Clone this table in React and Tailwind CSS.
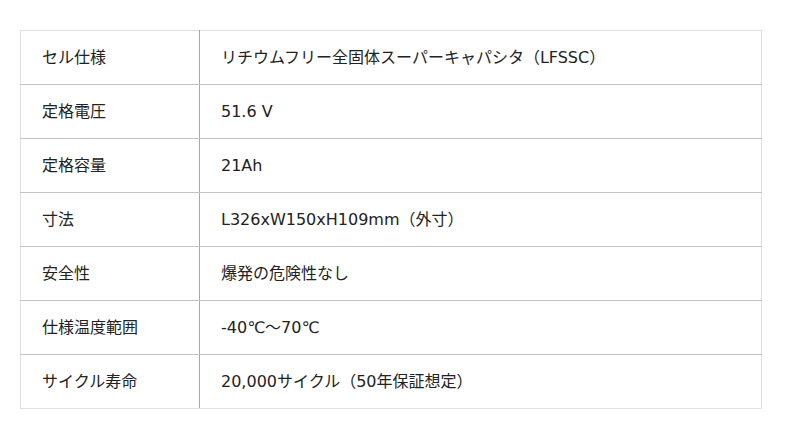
import React from 'react';

const specs = [
  ['セル仕様', 'リチウムフリー全固体スーパーキャパシタ（LFSSC）'],
  ['定格電圧', '51.6 V'],
  ['定格容量', '21Ah'],
  ['寸法', 'L326xW150xH109mm（外寸）'],
  ['安全性', '爆発の危険性なし'],
  ['仕様温度範囲', '-40℃〜70℃'],
  ['サイクル寿命', '20,000サイクル（50年保証想定）'],
];

export default function App() {
  return (
    <div
      className="w-[800px] h-[439px] bg-white pt-[30px] pl-[20px]"
      style={{ fontFamily: '"DejaVu Sans", "Noto Sans CJK JP", sans-serif' }}
    >
      <table className="w-[742px] border-collapse text-[16px] text-[#222]">
        <tbody>
          {specs.map(([label, value], i) => (
            <tr key={label} className="h-[54px]">
              <td
                className={
                  'w-[179px] pl-[21px] border-l border-l-[#e0e0e0] border-r border-r-[#a8a8a8] ' +
                  (i === 0 ? 'border-t border-t-[#e0e0e0] ' : '') +
                  (i === specs.length - 1 ? 'border-b border-b-[#e0e0e0]' : 'border-b border-b-[#c4c4c4]')
                }
              >
                {label}
              </td>
              <td
                className={
                  'pl-[21px] border-r border-r-[#e0e0e0] ' +
                  (i === 0 ? 'border-t border-t-[#e0e0e0] ' : '') +
                  (i === specs.length - 1 ? 'border-b border-b-[#e0e0e0]' : 'border-b border-b-[#c4c4c4]')
                }
              >
                {value}
              </td>
            </tr>
          ))}
        </tbody>
      </table>
    </div>
  );
}
